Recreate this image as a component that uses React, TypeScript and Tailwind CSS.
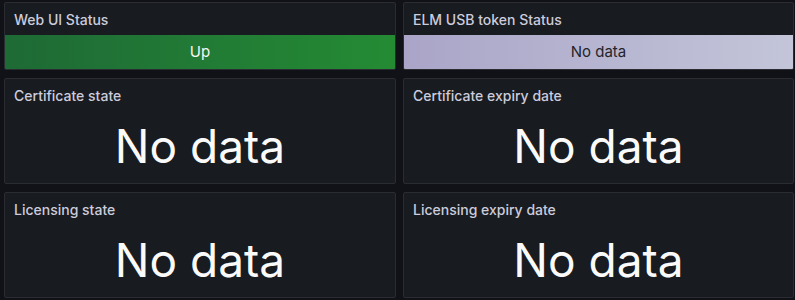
const font = { fontFamily: "Inter, 'Noto Sans', sans-serif" };

function Panel({ title, children }: { title: string; children: React.ReactNode }) {
  return (
    <div className="flex flex-col overflow-hidden rounded-[2px] border border-[#2a2c32] bg-[#181b1f]">
      <div className="flex h-8 shrink-0 items-center px-[9px] pt-[2px] text-sm font-medium text-[#ccccdc]">{title}</div>
      {children}
    </div>
  );
}

function BigValue() {
  return (
    <div className="flex flex-1 items-center justify-center pb-[2px] text-[46px] leading-none text-[#fafafa]">
      No data
    </div>
  );
}

export default function App() {
  return (
    <div
      className="grid h-[300px] w-[795px] grid-cols-[392px_391px] grid-rows-[68px_106px_106px] gap-x-[7px] gap-y-2 bg-[#111217] pl-1 pt-[2px]"
      style={font}
    >
      <Panel title="Web UI Status">
        <div className="flex flex-1 items-center justify-center bg-gradient-to-r from-[#1e6a35] to-[#248b33] text-[15px] text-[#f4f5f5]">
          Up
        </div>
      </Panel>
      <Panel title="ELM USB token Status">
        <div className="flex flex-1 items-center justify-center bg-gradient-to-r from-[#aaa5c8] to-[#c3c5d9] text-[15px] text-[#24242b]">
          No data
        </div>
      </Panel>
      <Panel title="Certificate state">
        <BigValue />
      </Panel>
      <Panel title="Certificate expiry date">
        <BigValue />
      </Panel>
      <Panel title="Licensing state">
        <BigValue />
      </Panel>
      <Panel title="Licensing expiry date">
        <BigValue />
      </Panel>
    </div>
  );
}
